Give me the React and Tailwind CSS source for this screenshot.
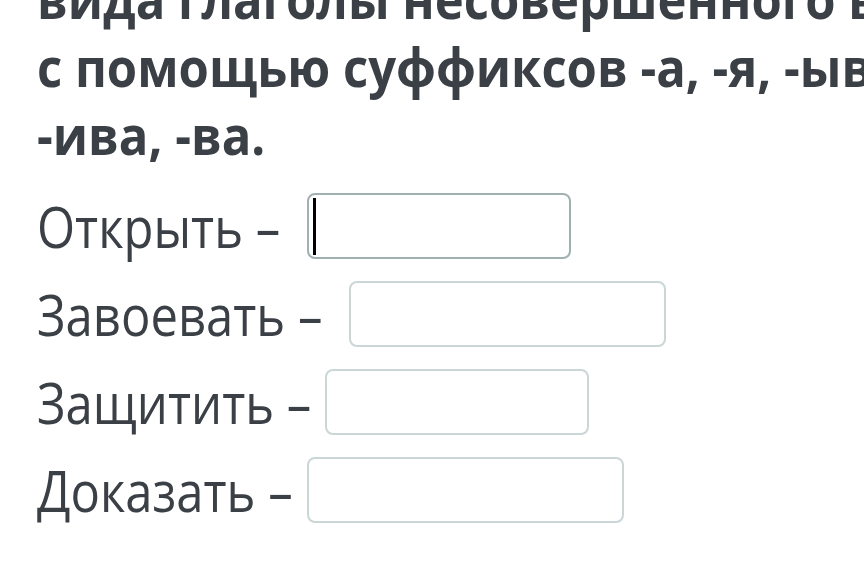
export default function App() {
  const rows = [
    { label: "Открыть –", w: "w-[264px]", ml: "ml-[27px]", focus: true },
    { label: "Завоевать –", w: "w-[317px]", ml: "ml-[27px]" },
    { label: "Защитить –", w: "w-[264px]", ml: "ml-[14px]" },
    { label: "Доказать –", w: "w-[317px]", ml: "ml-[14px]" },
  ];
  return (
    <div className="w-[864px] h-[573px] overflow-hidden bg-white text-[#3b4046] font-['Open_Sans',sans-serif]">
      <div className="pl-[37px] mt-[-36px] font-bold text-[49px] leading-[68px] whitespace-nowrap">
        <div className="scale-y-[1.08]">вида глаголы несовершенного вида</div>
        <div className="scale-y-[1.08]">с помощью суффиксов -а, -я, -ыва,</div>
        <div className="scale-y-[1.08]">-ива, -ва.</div>
      </div>
      <div className="pl-[37px] mt-[25px] flex flex-col gap-[22px]">
        {rows.map((r) => (
          <div key={r.label} className="flex items-center h-[66px]">
            <span className="inline-block text-[49px] leading-[66px] whitespace-nowrap scale-y-[1.17]">
              {r.label}
            </span>
            <div
              className={`${r.ml} ${r.w} h-[66px] shrink-0 rounded-[8px] border-2 ${
                r.focus ? "border-[#a1b1b1]" : "border-[#cbd6d6]"
              } flex items-center pl-[4px]`}
            >
              {r.focus && <div className="w-[3px] h-[57px] bg-black" />}
            </div>
          </div>
        ))}
      </div>
    </div>
  );
}
